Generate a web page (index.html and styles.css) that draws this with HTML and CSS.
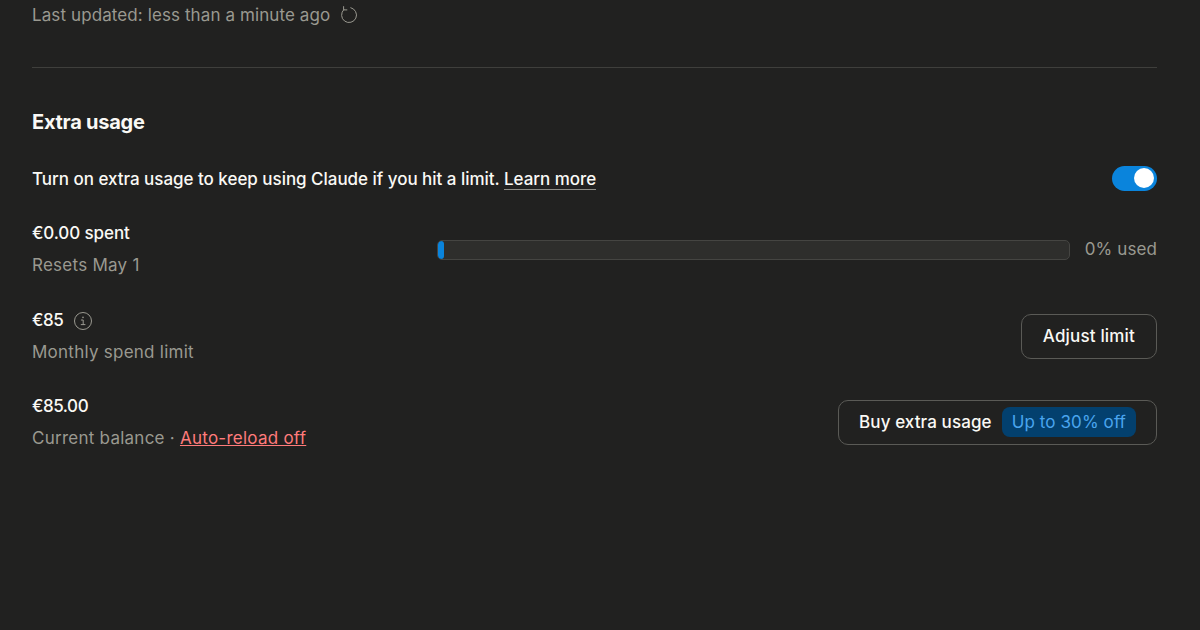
FILE: index.html
```html
<!DOCTYPE html>
<html lang="en">
<head>
    <meta charset="UTF-8">
    <meta name="viewport" content="width=device-width, initial-scale=1.0">
    <title>Extra usage</title>
    <link rel="stylesheet" href="styles.css">
</head>
<body>
    <div class="container">
        <div class="updated">
            <span>Last updated: less than a minute ago</span>
            <svg class="refresh-icon" width="20" height="20" viewBox="0 0 20 20" fill="none" stroke="currentColor" stroke-width="1">
                <path d="M11.8 2.7A7.5 7.5 0 1 1 4.8 4.6" stroke-linecap="round"/>
                <path d="M4.6 1.6V4.9H7.9" stroke-linecap="round" stroke-linejoin="round"/>
            </svg>
        </div>
        <hr class="divider">
        <h2 class="section-title">Extra usage</h2>
        <div class="toggle-row">
            <p>Turn on extra usage to keep using Claude if you hit a limit. <a href="#" class="learn-link">Learn more</a></p>
            <div class="toggle"><span class="toggle-knob"></span></div>
        </div>
        <div class="usage-row spent-row">
            <div class="usage-info">
                <div class="usage-value">€0.00 spent</div>
                <div class="usage-label">Resets May 1</div>
            </div>
            <div class="meter">
                <div class="meter-track"><div class="meter-fill"></div></div>
                <span class="meter-text">0% used</span>
            </div>
        </div>
        <div class="usage-row">
            <div class="usage-info">
                <div class="usage-value amount">€85
                    <svg class="info-icon" width="20" height="20" viewBox="0 0 20 20" fill="none" stroke="currentColor" stroke-width="1">
                        <circle cx="10" cy="10" r="8.5"/>
                        <path d="M8.3 9H10.2V13.6M8.2 13.6H12" stroke-linecap="round" stroke-linejoin="round"/>
                        <circle cx="10" cy="6.4" r="0.8" fill="currentColor" stroke="none"/>
                    </svg>
                </div>
                <div class="usage-label">Monthly spend limit</div>
            </div>
            <button class="btn">Adjust limit</button>
        </div>
        <div class="usage-row">
            <div class="usage-info">
                <div class="usage-value amount">€85.00</div>
                <div class="usage-label">Current balance · <a href="#" class="reload-link">Auto-reload off</a></div>
            </div>
            <button class="btn btn-buy">Buy extra usage <span class="discount">Up to 30% off</span></button>
        </div>
    </div>
</body>
</html>
```

FILE: styles.css
```css
body {
    margin: 0;
    background-color: #212120;
    color: #faf9f5;
    font-family: "Inter", "Liberation Sans", sans-serif;
    font-size: 17px;
    line-height: 24px;
    height: 630px;
    overflow: hidden;
}

.container {
    width: 1125px;
    margin-left: 32px;
    padding-top: 3px;
}

.updated {
    display: flex;
    align-items: center;
    gap: 9px;
    color: #9a9990;
    letter-spacing: 0.1px;
}

.refresh-icon {
    color: #9a9990;
}

.divider {
    border: none;
    border-top: 1px solid #3f3f3c;
    margin: 40px 0 0;
}

.section-title {
    margin: 40px 0 0;
    font-size: 20px;
    line-height: 28px;
    font-weight: 700;
    letter-spacing: -0.25px;
}

.toggle-row {
    display: flex;
    justify-content: space-between;
    align-items: center;
    margin-top: 27px;
    height: 32px;
}

.toggle-row p {
    margin: 0;
    letter-spacing: -0.03px;
    font-weight: 500;
}

.learn-link {
    color: inherit;
    text-decoration: none;
    border-bottom: 1px solid #8f8e88;
}

.toggle {
    width: 45px;
    height: 25px;
    margin-bottom: 2px;
    border-radius: 13px;
    background-color: #0a84dc;
    display: flex;
    align-items: center;
    justify-content: flex-end;
    padding-right: 3px;
    box-sizing: border-box;
}

.toggle-knob {
    width: 20px;
    height: 20px;
    border-radius: 50%;
    background-color: #fff;
}

.usage-row {
    display: flex;
    justify-content: space-between;
    align-items: center;
    margin-top: 23px;
    height: 64px;
}

.spent-row {
    margin-top: 22px;
}

.usage-row + .usage-row + .usage-row {
    margin-top: 22px;
}

.usage-value {
    display: flex;
    align-items: center;
    gap: 10px;
    font-weight: 500;
    letter-spacing: -0.1px;
    height: 24px;
}

.amount {
    letter-spacing: -0.45px;
}

.usage-label {
    margin-top: 8px;
    color: #9a9990;
    letter-spacing: 0.25px;
}

.info-icon {
    color: #9a9990;
    margin-top: 2px;
}

.reload-link {
    color: #ff7b7b;
    letter-spacing: 0.25px;
}

.meter {
    display: flex;
    align-items: center;
    gap: 15px;
    width: 720px;
    margin-top: 2px;
}

.meter-track {
    flex: 1;
    height: 20px;
    box-sizing: border-box;
    background-color: #2e2e2c;
    border: 1px solid #454542;
    border-radius: 5px;
    overflow: hidden;
}

.meter-fill {
    width: 6px;
    height: 100%;
    background-color: #0a84dc;
    border-radius: 4px;
}

.meter-text {
    color: #9a9990;
    letter-spacing: 0.1px;
    margin-top: -2px;
}

.btn {
    height: 45px;
    padding: 0 21px;
    background: none;
    color: #faf9f5;
    border: 1px solid #5a5a56;
    border-radius: 10px;
    font: inherit;
    font-weight: 500;
    letter-spacing: 0.17px;
    display: flex;
    align-items: center;
}

.btn-buy {
    padding: 0 20px;
    gap: 10px;
    letter-spacing: 0.1px;
}

.discount {
    background-color: #03406e;
    color: #4aa5ee;
    border-radius: 8px;
    padding: 0 10px;
    height: 30px;
    display: flex;
    align-items: center;
    font-weight: 400;
}
```
